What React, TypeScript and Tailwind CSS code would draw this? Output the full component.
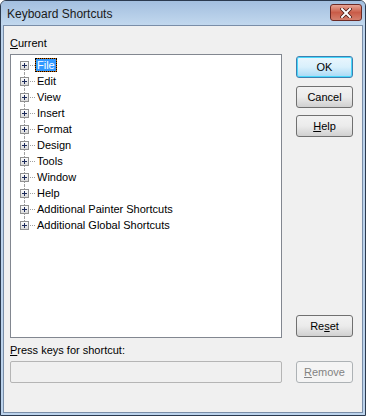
import React from 'react';

const items = [
    "File",
    "Edit",
    "View",
    "Insert",
    "Format",
    "Design",
    "Tools",
    "Window",
    "Help",
    "Additional Painter Shortcuts",
    "Additional Global Shortcuts",
];

function PlusBox() {
    return (
        <svg width="9" height="9" viewBox="0 0 9 9" className="block">
            <defs>
                <linearGradient id="pb" x1="0" y1="0" x2="0" y2="1">
                    <stop offset="0" stopColor="#ffffff"/>
                    <stop offset="1" stopColor="#d8d8d8"/>
                </linearGradient>
            </defs>
            <rect x="0.5" y="0.5" width="8" height="8" fill="url(#pb)" stroke="#919191"/>
            <path d="M2 4.5H7M4.5 2V7" stroke="#1c2a5a" strokeWidth="1"/>
        </svg>
    );
}

type TreeRowProps = {
    label: string;
    first: boolean;
    last: boolean;
    selected: boolean;
};

function TreeRow(props: TreeRowProps) {
    return (
        <div className="h-[16px] flex items-center">
            <div className="relative w-[9px] h-[16px] ml-[9px] flex items-center">
                {!props.first && (
                    <div className="absolute left-[4px] top-0 h-[4px] border-l border-dotted border-[#a0a0a0]"/>
                )}
                {!props.last && (
                    <div className="absolute left-[4px] top-[13px] h-[3px] border-l border-dotted border-[#a0a0a0]"/>
                )}
                <PlusBox/>
            </div>
            <div className="w-[5px] ml-[1px] border-t border-dotted border-[#a0a0a0]"/>
            {props.selected ? (
                <span className="ml-[0px] border border-dotted border-black bg-[#cc6600] leading-none">
                    <span className="block bg-[#3399ff] text-white px-[1px] leading-[12px]">{props.label}</span>
                </span>
            ) : (
                <span className="ml-[1px] px-[1px] leading-[14px] text-black">{props.label}</span>
            )}
        </div>
    );
}

type ButtonProps = {
    label: React.ReactNode;
    isDefault?: boolean;
    disabled?: boolean;
    className?: string;
};

function DialogButton(props: ButtonProps) {
    let look = "border-[#707070] bg-gradient-to-b from-[#f2f2f2] via-[#ebebeb] to-[#d0d0d0] text-black";
    if (props.isDefault) {
        look = "border-[#3c7fb1] bg-gradient-to-b from-[#eaf6fd] via-[#d9f0fc] to-[#a7d9f5] text-black shadow-[inset_0_0_0_1px_#48d8fb]";
    }
    if (props.disabled) {
        look = "border-[#adb2b5] bg-[#f4f4f4] text-[#838383]";
    }
    return (
        <div className={`w-[57px] h-[22px] rounded-[3px] border flex items-center justify-center text-[11px] ${look} ${props.className ?? ""}`}>
            {props.label}
        </div>
    );
}

export default function App() {
    return (
        <div className="w-[366px] h-[416px] flex flex-col bg-[#bcd3ec] rounded-t-[6px] border border-[#2b3a4f] overflow-hidden"
             style={{fontFamily: '"Liberation Sans", Arial, sans-serif'}}>
            <div className="h-[24px] flex items-center justify-between bg-gradient-to-b from-[#a3bfdf] to-[#c2d8ee] shrink-0">
                <div className="pl-[6px] pt-[1px] text-[12px] text-[#1a1a1a]">Keyboard Shortcuts</div>
                <div className="mr-[3px] mt-[-1px] w-[32px] h-[17px] rounded-[3px] border border-[#6b2a25] bg-gradient-to-b from-[#e7a595] via-[#c95c48] to-[#d4806e] flex items-center justify-center">
                    <svg width="12" height="10" viewBox="0 0 12 10">
                        <path d="M2 1L10 9M10 1L2 9" stroke="#4a1a14" strokeWidth="3.6" strokeLinecap="square"/>
                        <path d="M2 1L10 9M10 1L2 9" stroke="#ffffff" strokeWidth="2" strokeLinecap="square"/>
                    </svg>
                </div>
            </div>
            <div className="flex-1 mx-[2px] mb-[2px] border border-[#7a8ea8] bg-[#f0f0f0] flex pl-[6px] pr-[7px] pt-[10px] pb-[29px] text-[11px] text-black">
                <div className="flex flex-col w-[272px]">
                    <div className="h-[14px] leading-[14px] mb-[4px]"><span className="underline">C</span>urrent</div>
                    <div className="h-[284px] border border-[#828790] bg-white pt-[2px]">
                        {items.map((it, i) => (
                            <TreeRow key={it} label={it} first={i === 0} last={i === items.length - 1}
                                     selected={i === 0}/>
                        ))}
                    </div>
                    <div className="h-[14px] leading-[14px] mt-[5px] mb-[4px]"><span className="underline">P</span>ress keys for shortcut:</div>
                    <div className="h-[22px] border border-[#b5b5b5] bg-[#f0f0f0] rounded-[2px]"/>
                </div>
                <div className="flex flex-col ml-[14px] pt-[20px]">
                    <DialogButton label="OK" isDefault/>
                    <DialogButton label="Cancel" className="mt-[8px]"/>
                    <DialogButton label={<span><span className="underline">H</span>elp</span>} className="mt-[7px]"/>
                    <div className="mt-auto"/>
                    <DialogButton label={<span>Re<span className="underline">s</span>et</span>}/>
                    <DialogButton label={<span><span className="underline">R</span>emove</span>} disabled className="mt-[24px]"/>
                </div>
            </div>
        </div>
    );
}
